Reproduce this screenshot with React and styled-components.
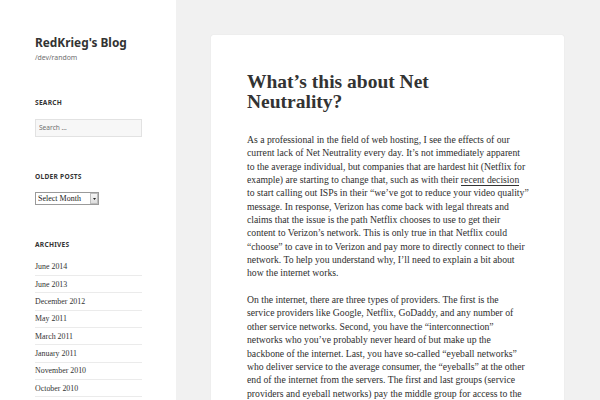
import React from 'react';
import styled, { createGlobalStyle } from 'styled-components';

const GlobalStyle = createGlobalStyle`
  html, body {
    margin: 0;
    padding: 0;
    height: 100%;
    overflow: hidden;
  }
  body {
    background: #f1f1f1;
    color: #333;
  }
`;

const archives = [
  'June 2014',
  'June 2013',
  'December 2012',
  'May 2011',
  'March 2011',
  'January 2011',
  'November 2010',
  'October 2010',
  'September 2010',
  'August 2010',
];

// lines are kept as in the original post so the wrap matches
const firstParagraph = [
  'As a professional in the field of web hosting, I see the effects of our',
  'current lack of Net Neutrality every day. It’s not immediately apparent',
  'to the average individual, but companies that are hardest hit (Netflix for',
  null,
  'to start calling out ISPs in their “we’ve got to reduce your video quality”',
  'message. In response, Verizon has come back with legal threats and',
  'claims that the issue is the path Netflix chooses to use to get their',
  'content to Verizon’s network. This is only true in that Netflix could',
  '“choose” to cave in to Verizon and pay more to directly connect to their',
  'network. To help you understand why, I’ll need to explain a bit about',
  'how the internet works.',
];

const secondParagraph = [
  'On the internet, there are three types of providers. The first is the',
  'service providers like Google, Netflix, GoDaddy, and any number of',
  'other service networks. Second, you have the “interconnection”',
  'networks who you’ve probably never heard of but make up the',
  'backbone of the internet. Last, you have so-called “eyeball networks”',
  'who deliver service to the average consumer, the “eyeballs” at the other',
  'end of the internet from the servers. The first and last groups (service',
  'providers and eyeball networks) pay the middle group for access to the',
  'rest of the internet.',
];

const App = () => {
  return (
    <>
      <GlobalStyle />
      <Page>
        <Sidebar>
          <SiteHeader>
            <SiteTitle href="#">RedKrieg's Blog</SiteTitle>
            <SiteDescription>/dev/random</SiteDescription>
          </SiteHeader>
          <Widgets>
            <Widget>
              <WidgetTitle>Search</WidgetTitle>
              <SearchField type="search" placeholder="Search …" />
            </Widget>
            <Widget>
              <WidgetTitle>Older Posts</WidgetTitle>
              <SelectWrap>
                <MonthSelect defaultValue="">
                  <option value="">Select Month</option>
                  {archives.map((a) => (
                    <option key={a}>{a}</option>
                  ))}
                </MonthSelect>
                <SelectArrow>
                  <svg width="3" height="2" viewBox="0 0 3 2">
                    <path d="M0 0h3L1.5 2z" fill="#222" />
                  </svg>
                </SelectArrow>
              </SelectWrap>
            </Widget>
            <Widget>
              <WidgetTitle>Archives</WidgetTitle>
              <ArchiveList>
                {archives.map((a) => (
                  <ArchiveItem key={a}>
                    <a href="#">{a}</a>
                  </ArchiveItem>
                ))}
              </ArchiveList>
            </Widget>
          </Widgets>
        </Sidebar>
        <Main>
          <Post>
            <PostTitle>What’s this about Net Neutrality?</PostTitle>
            <PostContent>
              <Paragraph>
                {firstParagraph.map((line, i) => (
                  <React.Fragment key={i}>
                    {line === null ? (
                      <>
                        example) are starting to change that, such as with their{' '}
                        <TextLink href="#">recent decision</TextLink>
                      </>
                    ) : (
                      line
                    )}
                    {i < firstParagraph.length - 1 && <br />}
                  </React.Fragment>
                ))}
              </Paragraph>
              <Paragraph>
                {secondParagraph.map((line, i) => (
                  <React.Fragment key={i}>
                    {line}
                    {i < secondParagraph.length - 1 && <br />}
                  </React.Fragment>
                ))}
              </Paragraph>
            </PostContent>
          </Post>
        </Main>
      </Page>
    </>
  );
};

const Page = styled.div`
  display: flex;
  height: 100vh;
  overflow: hidden;
`;

// Sidebar
const Sidebar = styled.aside`
  width: 176px;
  flex-shrink: 0;
  box-sizing: border-box;
  padding: 35px 34px 0 35px;
  background: #fff;
  display: flex;
  flex-direction: column;
`;
const SiteHeader = styled.header`
  display: flex;
  flex-direction: column;
`;
const SiteTitle = styled.a`
  font: 700 11.86px/14.06px 'Noto Sans', sans-serif;
  color: #333;
  text-decoration: none;
`;
const SiteDescription = styled.p`
  margin: 3.7px 0 0;
  font: 400 6.9px/10.5px 'Noto Sans', sans-serif;
  color: #707070;
`;
const Widgets = styled.div`
  display: flex;
  flex-direction: column;
  gap: 35px;
  margin-top: 35px;
`;
const Widget = styled.section`
  display: flex;
  flex-direction: column;
  align-items: flex-start;
`;
const WidgetTitle = styled.h2`
  margin: 0 0 10px;
  font: 700 6.6px/10.56px 'Noto Sans', sans-serif;
  letter-spacing: 0.04em;
  text-transform: uppercase;
  color: #333;
`;
const SearchField = styled.input`
  width: 100%;
  height: 18px;
  box-sizing: border-box;
  margin: 0;
  padding: 0 3px;
  border: 1px solid rgba(51, 51, 51, 0.1);
  border-radius: 0;
  background: #f7f7f7;
  font: 400 6.6px 'Noto Sans', sans-serif;
  color: #333;
  outline: none;
  &::placeholder {
    color: #707070;
  }
`;
const SelectWrap = styled.div`
  position: relative;
  width: 64px;
  height: 13px;
`;
const MonthSelect = styled.select`
  display: block;
  appearance: none;
  width: 100%;
  height: 100%;
  box-sizing: border-box;
  margin: 0;
  padding: 0 0 0 2px;
  border: 1px solid #9a9a9a;
  border-radius: 0;
  background: #fff;
  font: 400 8px/11px 'Liberation Serif', serif;
  color: #222;
  outline: none;
`;
const SelectArrow = styled.span`
  position: absolute;
  top: 1px;
  right: 1px;
  bottom: 1px;
  width: 8px;
  box-sizing: border-box;
  display: flex;
  align-items: center;
  justify-content: center;
  border: 1px solid #bdbdbd;
  background: linear-gradient(#f6f6f6, #dedede);
  pointer-events: none;
  svg {
    display: block;
  }
`;
const ArchiveList = styled.ul`
  list-style: none;
  margin: -2.5px 0 0;
  padding: 0;
  width: 100%;
`;
const ArchiveItem = styled.li`
  padding: 2.7px 0;
  border-bottom: 1px solid #ebebeb;
  font: 400 7.9px/11px 'Liberation Serif', serif;
  a {
    color: #333;
    text-decoration: none;
  }
`;

// Main column
const Main = styled.main`
  flex: 1;
  padding: 35px 36px 0 35px;
  overflow: hidden;
`;
const Post = styled.article`
  background: #fff;
  border-radius: 2px;
  box-shadow: 0 0 1px rgba(0, 0, 0, 0.15);
  padding: 36.7px 36px 40px;
`;
const PostTitle = styled.h1`
  margin: 0;
  max-width: 250px;
  font: 700 19.5px/20px 'Liberation Serif', serif;
  color: #333;
`;
const PostContent = styled.div`
  margin-top: 21.1px;
`;
const Paragraph = styled.p`
  margin: 0 0 13.36px;
  font: 400 9.7px/13.36px 'Liberation Serif', serif;
  color: #2e2e2e;
  white-space: nowrap;
`;
const TextLink = styled.a`
  color: #333;
  text-decoration: none;
  border-bottom: 1px solid #333;
`;

export default App;
